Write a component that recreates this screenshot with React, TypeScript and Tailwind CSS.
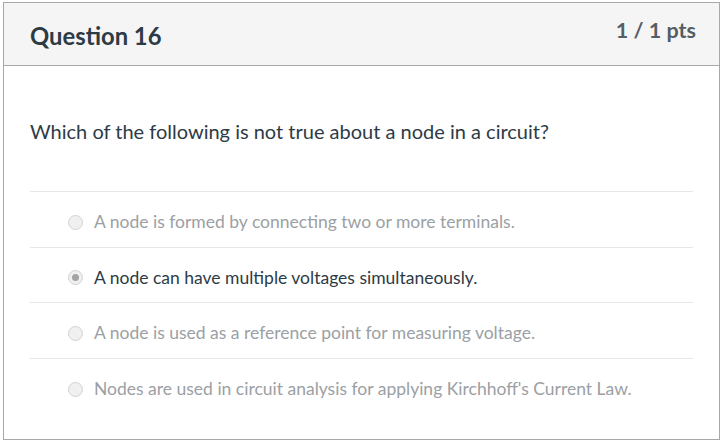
import React from 'react';

const answers = [
  { text: 'A node is formed by connecting two or more terminals.', selected: false },
  { text: 'A node can have multiple voltages simultaneously.', selected: true },
  { text: 'A node is used as a reference point for measuring voltage.', selected: false },
  { text: "Nodes are used in circuit analysis for applying Kirchhoff's Current Law.", selected: false },
];

const Radio: React.FC<{ checked: boolean }> = ({ checked }) => (
  <span className="flex h-[15px] w-[15px] shrink-0 items-center justify-center rounded-full border border-[#d3d3d3] bg-[#f0f0f0]">
    {checked && <span className="h-[7px] w-[7px] rounded-full bg-[#a3a3a3]" />}
  </span>
);

export default function App() {
  return (
    <div className="min-h-screen bg-white pl-[3px] pt-[2px] font-['Lato',sans-serif]">
      <div className="h-[438px] w-[717px] border border-[#a8a8a8]">
        {/* Header */}
        <div className="flex h-[63px] items-start justify-between border-b border-[#a8a8a8] bg-[#f5f5f5] pl-[26px] pr-[23px]">
          <h2 className="mt-[17px] text-[23.8px] font-bold leading-[32px] text-[#2d3b45]">Question 16</h2>
          <span className="mt-[12px] text-[21.5px] font-bold leading-[30px] text-[#555e66]">1 / 1 pts</span>
        </div>

        {/* Body */}
        <div className="px-[26px]">
          <p className="mt-[50px] text-[20px] leading-[30px] text-[#2d3b45]">
            Which of the following is not true about a node in a circuit?
          </p>
          <div className="mt-[45px] border-t border-[#e6e6e6]">
            {answers.map((a, i) => (
              <div
                key={i}
                className={`flex h-[55.5px] items-center gap-[11px] pl-[38px] pt-[6px] ${i < answers.length - 1 ? 'border-b border-[#e6e6e6]' : ''}`}
              >
                <Radio checked={a.selected} />
                <span className={`text-[17.5px] leading-[26px] ${a.selected ? 'text-[#2d3b45]' : 'text-[#9ba0a4]'}`}>
                  {a.text}
                </span>
              </div>
            ))}
          </div>
        </div>
      </div>
    </div>
  );
}
